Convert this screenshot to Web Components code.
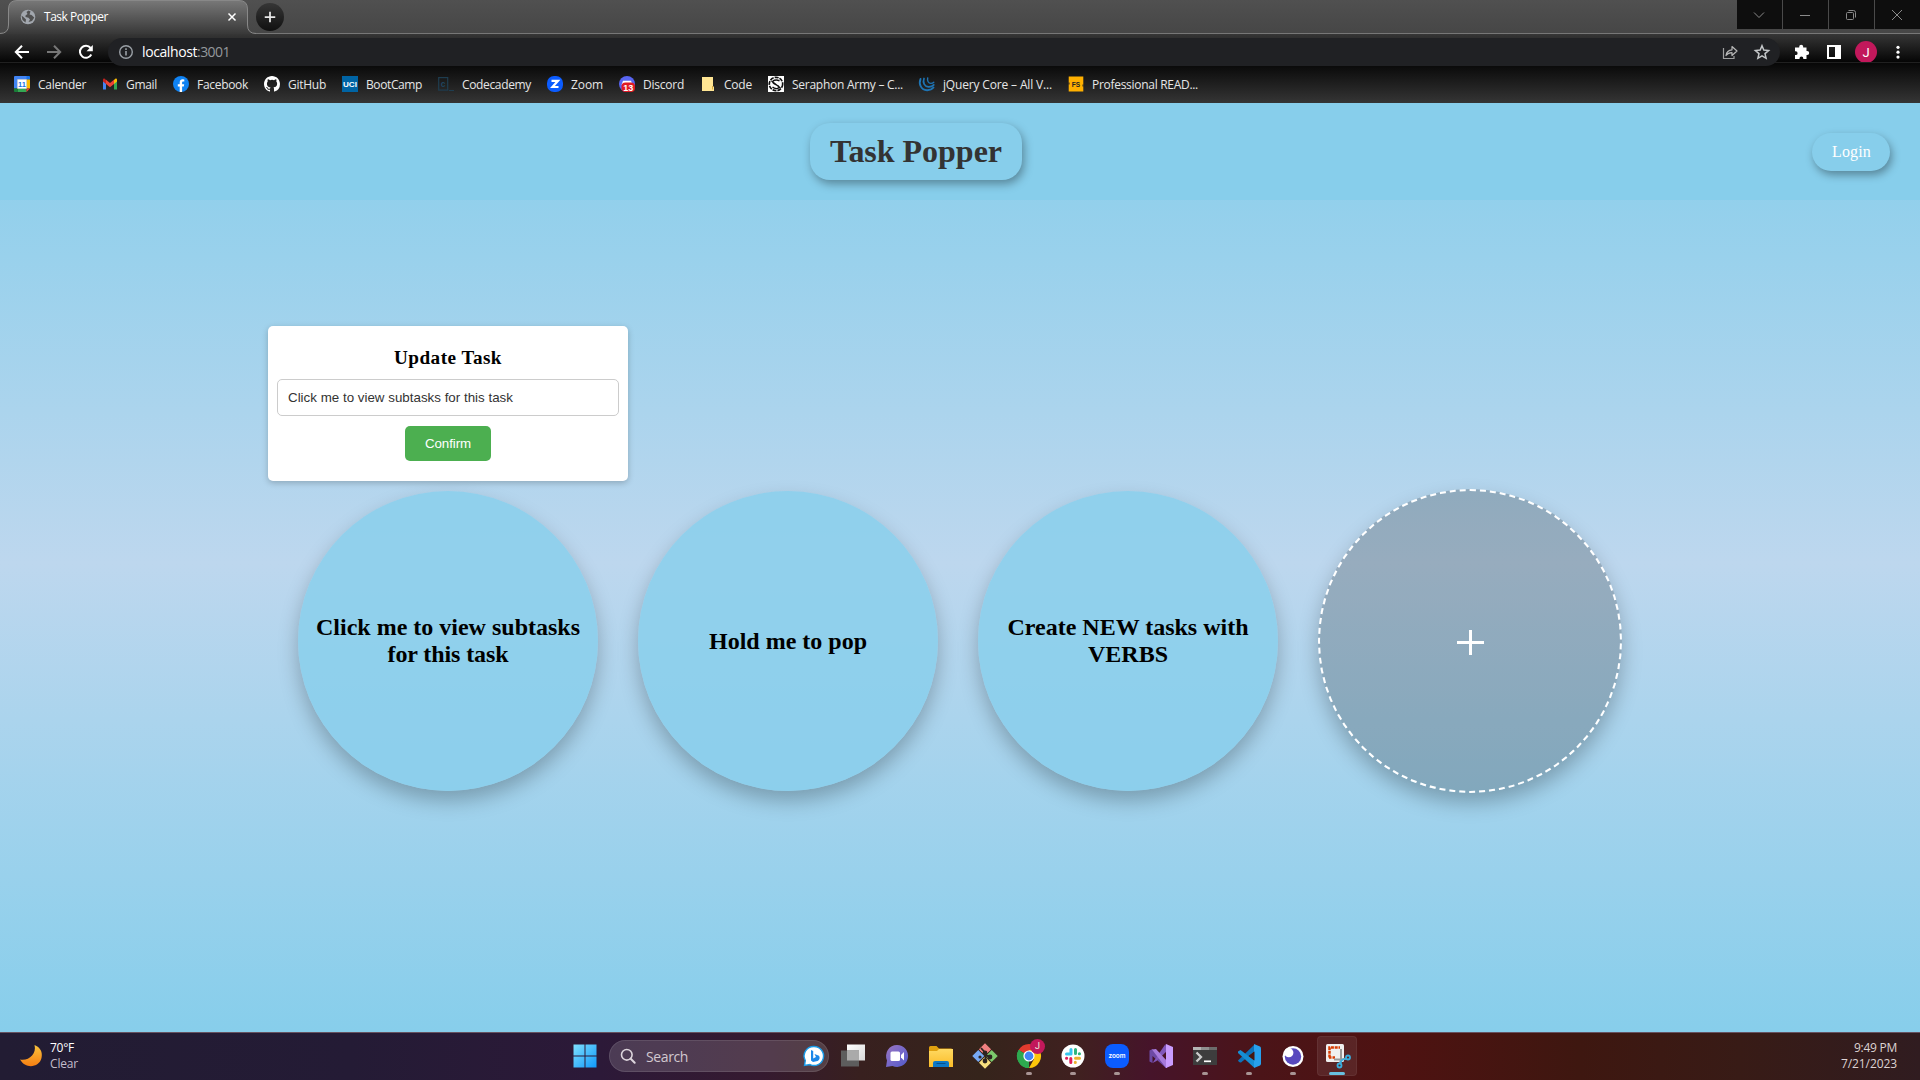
<!DOCTYPE html>
<html lang="en">
<head>
<meta charset="utf-8">
<title>Task Popper</title>
<style>
html,body{margin:0;height:100%;overflow:hidden;background:#87ceeb}
</style>
</head>
<body>
<desktop-screen></desktop-screen>
<script>
const ICONS = {
globe:['0 0 16 16','<circle cx="8" cy="8" r="7.3" fill="#a2a7ae"/><path d="M8.500 1.500 6.500 3l1 2-2 1.500v1.500l3 .8 1.500 1.700-1.500 2.500 3.500-1 2.300-3.500-2.800-2.500-2-.5 1-3zM1.500 6.500l2.500 2 2 2-.5 3-3-2.500z" fill="#505050"/>'],
close:['0 0 16 16','<path d="M4 4l8 8M12 4l-8 8" stroke="#fff" stroke-width="1.7"/>'],
plus:['0 0 16 16','<path d="M8 2v12M2 8h12" stroke="#e8e8e8" stroke-width="2"/>'],
back:['0 0 16 16','<path d="M15 8H2M8 1.700 1.800 8 8 14.300" fill="none" stroke="#fff" stroke-width="2"/>'],
fwd:['0 0 16 16','<path d="M1 8h13M8 1.700 14.200 8 8 14.300" fill="none" stroke="#777" stroke-width="2"/>'],
reload:['0 0 16 16','<path d="M13.300 10.500A6 6 0 1 1 12.600 4" fill="none" stroke="#fff" stroke-width="2"/><path d="M14.800 1v6.300H8.500z" fill="#fff"/>'],
info:['0 0 16 16','<circle cx="8" cy="8" r="6.300" fill="none" stroke="#9aa0a6" stroke-width="1.400"/><path d="M8 7v4.500M8 4.300v1.600" stroke="#9aa0a6" stroke-width="1.600"/>'],
share:['0 0 16 16','<path d="M1.500 4v10.500H12V12" fill="none" stroke="#a0a0a0" stroke-width="1.200"/><path d="M4 11.500C4.500 8 6.500 6 10 5.800V2.500L15 7l-5 4.500V8.700C7.500 8.700 5.500 9.500 4 11.500z" fill="none" stroke="#b8b8b8" stroke-width="1.200" stroke-linejoin="round"/>'],
star:['0 0 16 16','<path d="M8 1.700l1.800 4.400 4.800.4-3.600 3.100 1.100 4.700L8 11.800l-4.100 2.500L5 9.600 1.400 6.500l4.800-.4z" fill="none" stroke="#c4c7c9" stroke-width="1.500"/>'],
puzzle:['0 0 16 16','<path d="M2 3.500h3.200v-.7a2 2 0 0 1 4 0v.7h3.300V7h.7a2 2 0 0 1 0 4h-.7v4H9.300v-.6a1.900 1.900 0 0 0-3.800 0v.6H1v-3.900h.7a1.900 1.900 0 0 0 0-3.800H1V3.500z" fill="#fff"/>'],
panel:['0 0 16 16','<path d="M1 1h14v14H1zM3 3v10h6V3z" fill="#fff" fill-rule="evenodd"/>'],
dots:['0 0 16 16','<g fill="#fff"><circle cx="8" cy="3.300" r="1.600"/><circle cx="8" cy="8.200" r="1.600"/><circle cx="8" cy="13.100" r="1.600"/></g>'],
chev:['0 0 12 12','<path d="M1 3.500l5 5 5-5" fill="none" stroke="#8a8a8a"/>'],
min:['0 0 12 12','<path d="M1 6.500h10" stroke="#8a8a8a"/>'],
max:['0 0 12 12','<rect x="1.500" y="3.500" width="7" height="7" rx="1" fill="none" stroke="#8a8a8a"/><path d="M3.500 1.500h5a2 2 0 0 1 2 2v5" fill="none" stroke="#8a8a8a"/>'],
x:['0 0 12 12','<path d="M1 1l10 10M11 1L1 11" stroke="#8a8a8a"/>'],
cal:['0 0 16 16','<path fill="#4285f4" d="M0 1a1 1 0 0 1 1-1h14v3.500H3.500V12.500H0z"/><path fill="#1a73e8" d="M12.500 0H15a1 1 0 0 1 1 1v2.500h-3.500z"/><path fill="#fbbc04" d="M12.500 3.500H16v9h-3.500z"/><path fill="#34a853" d="M3.500 12.500h9V16h-9z"/><path fill="#188038" d="M0 12.500h3.500V16H1a1 1 0 0 1-1-1z"/><path fill="#ea4335" d="M12.500 12.500H16L12.500 16z"/><path fill="#fff" d="M3.300 3.300h9.400v9.400H3.300z"/><text x="8" y="10.700" font-family="Liberation Sans" font-size="7.500" font-weight="700" fill="#1a73e8" text-anchor="middle">11</text>'],
gmail:['0 0 16 16','<path fill="#4285f4" d="M1 4v9.500h3V7z"/><path fill="#34a853" d="M15 4v9.500h-3V7z"/><path fill="#fbbc04" d="M12 4l1.300-1.200C14.200 2.200 15 2.800 15 4v1.500L12 8z"/><path fill="#c5221f" d="M4 4 2.700 2.800C1.800 2.200 1 2.800 1 4v1.500L4 8z"/><path fill="#ea4335" d="M4 3.700 8 7l4-3.300V8l-4 3.200L4 8z"/>'],
fb:['0 0 16 16','<circle cx="8" cy="8" r="8" fill="#0f82f2"/><path d="M6.700 16v-5.500H4.800V8.200h1.900V6.500c0-2.100 1.200-3.200 3-3.200l1.600.1v2h-1c-.9 0-1.200.5-1.200 1.200v1.600h2.100l-.4 2.300H9.100V16z" fill="#fff"/>'],
gh:['0 0 16 16','<path fill="#fff" d="M8 0C3.580 0 0 3.580 0 8c0 3.540 2.290 6.530 5.470 7.590.4.070.55-.17.55-.38v-1.490c-2.010.37-2.530-.49-2.690-.94-.09-.23-.48-.94-.82-1.130-.28-.15-.68-.52-.01-.53.63-.01 1.080.58 1.230.82.720 1.210 1.870.87 2.330.66.070-.52.280-.87.510-1.070-1.780-.2-3.640-.89-3.640-3.950 0-.87.310-1.590.82-2.150-.08-.2-.36-1.020.08-2.120 0 0 .67-.21 2.200.82a7.500 7.500 0 0 1 4 0c1.530-1.040 2.200-.82 2.200-.82.440 1.100.160 1.920.08 2.120.51.560.82 1.270.82 2.150 0 3.070-1.870 3.750-3.650 3.950.29.250.54.730.54 1.480v2.200c0 .21.150.46.550.38A8 8 0 0 0 16 8c0-4.420-3.580-8-8-8z"/>'],
uci:['0 0 16 16','<path fill="#0064a4" d="M0 0h16v16H0z"/><text x="8" y="10.800" font-family="Liberation Sans" font-size="7.500" font-weight="700" fill="#fff" text-anchor="middle" textLength="14" lengthAdjust="spacingAndGlyphs">UCI</text>'],
cc:['0 0 16 16','<rect x=".7" y="1.600" width="9" height="12.500" fill="none" stroke="#1e3d50" stroke-width="1.200"/><path d="M11 14.500h5" stroke="#1e3d50"/><text x="5.200" y="11" font-family="Liberation Sans" font-size="8.500" font-weight="700" fill="#1f4560" text-anchor="middle">c</text>'],
zm:['0 0 16 16','<rect width="16" height="16" rx="7" fill="#0b5cff"/><path d="M4.500 4.800h6.500L5.500 11h6" fill="none" stroke="#fff" stroke-width="2.200"/>'],
disc:['0 0 16 16','<circle cx="8" cy="8" r="8" fill="#5865f2"/><path d="M4 4.800h8l1.500 4H2.500z" fill="#fff"/><rect x="2.500" y="6.500" width="13.500" height="9.500" rx="4" fill="#e01b24"/><text x="9.200" y="14.500" font-family="Liberation Sans" font-size="9" font-weight="700" fill="#fff" text-anchor="middle">13</text>'],
note:['0 0 16 16','<path d="M2 1h11v9.500h1V15H2z" fill="#ffe593"/><path d="M12.500 10v3.500" stroke="#d6aa3c"/>'],
ser:['0 0 16 16','<path fill="#fff" d="M0 0h16v16H0z"/><circle cx="8" cy="8" r="6.700" fill="none" stroke="#111" stroke-width="1.700" stroke-dasharray="4 1"/><path d="M11.500 4.800C8 3 3.800 4.500 5 6.800s6 2 6 4.200-4.500 2-6.500 0M3.500 5l9 7" fill="none" stroke="#111" stroke-width="1.400"/>'],
jq:['0 0 16 16','<g fill="none" stroke="#1e74b4" stroke-linecap="round"><path d="M1.500 3C-.5 8 2 14 8 14.200c3 .1 5-.9 6.500-2.700" stroke-width="1.900"/><path d="M5 2.500C3.500 6.500 5.500 10.500 9.500 10.800c2.500.1 4-.6 5.300-2" stroke-width="1.700"/><path d="M8.700 2C8 5 9.500 7.200 11.800 7.400c1.300 0 2.300-.4 3-1.200" stroke-width="1.400"/></g>'],
fs:['0 0 16 16','<path fill="#ffb000" d="M.700.500h14.600v15H.700z"/><path d="M1 6.500v2M15 8.500v2" stroke="#222" stroke-width="1"/><text x="8" y="10.700" font-family="Liberation Sans" font-size="6.500" font-weight="700" fill="#222" text-anchor="middle">FS</text>'],
moon:['0 0 24 24','<defs><linearGradient id="m" x1="0" y1="0" x2="0" y2="1"><stop stop-color="#f9c43e"/><stop offset="1" stop-color="#f57e12"/></linearGradient></defs><path d="M15.500 1C21 3 24 8 22.500 14 20.500 23 7 26 1 15.500 9 17.500 18 10 15.500 1z" fill="url(#m)"/>'],
win:['0 0 24 24','<defs><linearGradient id="w" x1="0" y1="0" x2="1" y2="1"><stop stop-color="#7fe0fd"/><stop offset="1" stop-color="#0f98fa"/></linearGradient></defs><path fill="url(#w)" d="M.5.5h11v11H.5zM12.500.5h11v11h-11zM.5 12.500h11v11H.5zM12.500 12.500h11v11h-11z"/>'],
search:['0 0 16 16','<circle cx="6.800" cy="6.800" r="5.300" fill="none" stroke="#ddd5dc" stroke-width="1.600"/><path d="M10.700 10.700l4 4" stroke="#ddd5dc" stroke-width="2" stroke-linecap="round"/>'],
bing:['0 0 20 20','<path d="M10 .5a9.500 9.500 0 1 1-4 18.100L.5 19.500l.8-5A9.500 9.500 0 0 1 10 .5z" fill="#fff" stroke="#199be8" stroke-width="1.400"/><path d="M7 4l2.200 1v7.500l2.800-1.500-1.500-3 4.500 1.800c1.500 2.700 0 4.500-1.500 5.200L9 16l-2-1.500z" fill="#1b87e8"/>'],
tv:['0 0 24 24','<defs><linearGradient id="t" x1="0" y1="0" x2="1" y2="1"><stop stop-color="#fff"/><stop offset="1" stop-color="#d8d8d8"/></linearGradient></defs><path fill="url(#t)" d="M6 .5h18v16H6z"/><path fill="#5d5d5d" d="M0 6.500h18v16H0z"/><path fill="#aaa" d="M6 6.500h12v10H6z"/>'],
chat:['0 0 24 24','<defs><linearGradient id="c" x1="0" y1="0" x2="1" y2="1"><stop stop-color="#9a75bf"/><stop offset=".5" stop-color="#7668c9"/><stop offset="1" stop-color="#5059c9"/></linearGradient></defs><path d="M12 1a11 11 0 1 1-4.500 21L1 23l1-6.500A11 11 0 0 1 12 1z" fill="url(#c)"/><rect x="5.500" y="7.500" width="9.500" height="9.500" rx="1.500" fill="#fff"/><path d="M16 11l3-3v8.500l-3-3z" fill="#fff"/>'],
folder:['0 0 24 24','<defs><linearGradient id="f" x1="0" y1="0" x2="0" y2="1"><stop stop-color="#ffd962"/><stop offset="1" stop-color="#fbbc28"/></linearGradient></defs><path d="M0 3.500Q0 2 1.500 2h6L10 4.500h12q2 0 2 2V12H0z" fill="#dfa00f"/><path d="M0 7h8l2-2h14v18H0z" fill="url(#f)"/><path d="M4 23v-4q0-2 2-2h12q2 0 2 2v4z" fill="#0c78c6"/><path d="M7.500 19.500h9" stroke="#07508c"/>'],
git:['0 0 24 24','<g transform="translate(12 12) rotate(45)"><path fill="#f08080" d="M-9-9h8.500v8.500H-9z"/><path fill="#7cc96c" d="M.5-9H9v8.500H.5z"/><path fill="#78aaf5" d="M-9 .5h8.500V9H-9z"/><path fill="#f8df7e" d="M.5.5H9V9H.5z"/><path fill="#f08080" d="M-8.500-8.500h8v8h-8z"/></g><g stroke="#2c2420" stroke-width="1.800" fill="#2c2420"><path d="M8 4l4.500 5v9M12 10l5 4" fill="none"/><circle cx="12" cy="9" r="1.500"/><circle cx="12" cy="17" r="1.500"/><circle cx="17" cy="13" r="1.500"/><circle cx="7" cy="13" r=".7"/></g>'],
chrome:['0 0 24 24','<path d="M12 12 1.600 6A12 12 0 0 1 22.400 6z" fill="#e33b2e"/><path d="M12 12V24A12 12 0 0 1 1.600 6z" fill="#2da94f"/><path d="M12 12 22.400 6A12 12 0 0 1 12 24l5-9z" fill="#fdc60a"/><path d="M1.600 6h1L9 17l3 7A12 12 0 0 1 1.600 6z" fill="#2da94f"/><path d="M12 6h10.400l.9 2L12 11z" fill="#fdc60a"/><circle cx="12" cy="12" r="5.600" fill="#fff"/><circle cx="12" cy="12" r="4.400" fill="#4285f4"/>'],
slack:['0 0 24 24','<circle cx="12" cy="12" r="11.500" fill="#fff"/><g fill="none" stroke-width="3" stroke-linecap="round"><path d="M10 5.500v4.500M5.500 10H10" stroke="#36c5f0"/><path d="M14.500 5.500V9.500M18.500 9.800h-.2" stroke="#2eb67d"/><path d="M14.500 14.300h4M14.300 18.500v-.2" stroke="#ecb22e"/><path d="M9.800 14.500v4M5.500 14.300h.2" stroke="#e01e5a"/></g>'],
zoom:['0 0 24 24','<rect width="24" height="24" rx="8" fill="#0b5cff"/><text x="12" y="14" font-family="Inter" font-size="7" font-weight="600" fill="#fff" text-anchor="middle" textLength="17" lengthAdjust="spacingAndGlyphs">zoom</text>'],
vs:['0 0 24 24','<path d="M.5 6.500 3.500 5l14 14-.5 5L3.500 12v7L.5 17.500z" fill="#6d4aa5"/><path d="M3.500 19 16.500 0 18 7 7.500 17z" fill="#8157bb"/><path d="M3 5.500 7 5l11 12v7h-1z" fill="#a77bdc"/><path d="M17 0l7 3v18l-7 3z" fill="#c99cff"/>'],
term:['0 0 24 24','<path fill="#3d3d3d" d="M0 3h24v18H0z"/><path fill="#b5b5b5" d="M0 3h8v3H0z"/><path fill="#909090" d="M8 3h8v3H8z"/><path fill="#6c6c6c" d="M16 3h8v3h-8z"/><path d="M3.500 8.500l4.500 4.500-4.500 4.500" fill="none" stroke="#ccc" stroke-width="2.300"/><path d="M11 17.300h7" stroke="#fff" stroke-width="1.700"/>'],
code:['0 0 24 24','<path d="M1 16.500 17 1l1 6L4 18.500q-2 .5-3-2z" fill="#0c72ba"/><path d="M1 7.500 3.500 6 18 17l-1 6.500L1 9z" fill="#168ed4"/><path d="M17 0l6 2.500q1 .5 1 2v15q0 1.500-1 2L17 24z" fill="#27a0ec"/><path d="M17.500 7.500v9L11.500 12z" fill="#46170f"/>'],
moonapp:['0 0 24 24','<circle cx="12" cy="12.500" r="10.500" fill="#fff"/><circle cx="12" cy="12.500" r="8.200" fill="#5849be"/><circle cx="7.800" cy="8.700" r="4.600" fill="#fff"/>'],
snip:['0 0 28 28','<rect x="3" y="2" width="18" height="18" rx="1.500" fill="#f0f0f0"/><path d="M6.500 15.500V5.500H17" fill="none" stroke="#d83b01" stroke-width="2.500" stroke-dasharray="3 .8"/><path d="M6 15.500h6" stroke="#d83b01" stroke-width="2.500" stroke-dasharray="2.500 1"/><path d="M18 7v10l-1 5M11 17.500h8l4-1" fill="none" stroke="#999" stroke-width="2"/><g fill="none" stroke="#39aede" stroke-width="1.800"><circle cx="25" cy="15.500" r="2"/><circle cx="16.500" cy="23.500" r="2"/><path d="M17 21.500l2-3.500 4-1.500"/></g>']
};
const define = (tag, html, setup) => {
  const tpl = document.createElement('template');
  tpl.innerHTML = html;
  customElements.define(tag, class extends HTMLElement {
    connectedCallback() {
      if (this.shadowRoot) return;
      this.attachShadow({mode:'open'}).append(tpl.content.cloneNode(true));
      if (setup) setup(this, this.shadowRoot);
    }
  });
};

/* An icon from the table; `size` sets its side in pixels. */
define('ui-icon','<style>:host{display:block;flex:none}svg{display:block;overflow:visible}</style>',(el,root)=>{
  const [box,body]=ICONS[el.getAttribute('name')], s=el.getAttribute('size')||16;
  root.innerHTML+=`<svg viewBox="${box}" width="${s}" height="${s}">${body}</svg>`;
});

/* A one-line label whose tracking is spread to fill the width `w`. */
define('fit-text','<style>:host{display:block;flex:none;white-space:nowrap}span{display:inline-block}</style><span></span>',(el,root)=>{
  const span=root.querySelector('span'), w=+el.getAttribute('w');
  span.textContent=el.getAttribute('text');
  const fit=(w-span.getBoundingClientRect().width)/span.textContent.length;
  span.style.letterSpacing=fit.toFixed(3)+'px';
  el.style.width=w+'px';
});

define('window-buttons',`<style>
:host{display:flex;gap:1px;height:29px;background:#4a4a4a}
div{width:45px;box-sizing:border-box;padding-right:1px;display:grid;place-items:center;background:#0e0e0e}
ui-icon{margin-right:1px}
</style><div><ui-icon name="chev" size="12"></ui-icon></div><div><ui-icon name="min" size="12"></ui-icon></div><div><ui-icon name="max" size="12"></ui-icon></div><div><ui-icon name="x" size="12"></ui-icon></div>`);

define('tab-strip',`<style>
:host{display:flex;height:34px;box-sizing:border-box;background:linear-gradient(#505050,#464646);box-shadow:inset 0 -1px #777;color:#fff;font-size:12px}
.tab{width:256px;height:34px;position:relative;flex:none}
.tab>svg{position:absolute;inset:0}
.row{position:relative;display:flex;align-items:center;height:34px;padding:0 17px 0 20px;gap:8px}
.row fit-text{margin-top:-1px}
.grow{flex:1}
.new{width:28px;height:28px;margin:3px 0 0;border-radius:50%;background:linear-gradient(#363636,#101010);display:grid;place-items:center}
</style>
<div class="tab"><svg width="256" height="34"><defs><linearGradient id="g" x1="0" y1="0" x2="0" y2="1"><stop stop-color="#787878"/><stop offset="1" stop-color="#363636"/></linearGradient></defs><path d="M0 33.500Q8.500 33.500 8.500 25V9Q8.500.5 17 .5H239Q247.500.5 247.500 9V25Q247.500 33.500 256 33.500V35H0z" fill="url(#g)"/><path d="M0 33.500Q8.500 33.500 8.500 25V9Q8.500.5 17 .5H239Q247.500.5 247.500 9V25Q247.500 33.500 256 33.500" fill="none" stroke="#888"/></svg>
<div class="row"><ui-icon name="globe" size="16"></ui-icon><fit-text w="64" text="Task Popper"></fit-text><div class="grow"></div><ui-icon name="close" size="14"></ui-icon></div></div>
<div class="new"><ui-icon name="plus" size="14"></ui-icon></div><div class="grow"></div><window-buttons></window-buttons>`);

define('address-bar',`<style>
:host{display:flex;align-items:flex-start;height:28px;box-sizing:border-box;padding:4px 0 0 14px;background:linear-gradient(#363636,#050505);color:#fff;font-size:14px}
.nav{display:flex;gap:16px;padding:6px 14px 0 0}
.omni{position:relative;z-index:1;flex:1;height:28px;border-radius:14px;background:#202124;display:flex;align-items:center;padding:0 10px;box-sizing:border-box}
.omni fit-text{margin-top:-1px}
.omni fit-text:nth-of-type(1){margin-left:8px}.port{color:#94989c}
.grow{flex:1}.omni ui-icon[name=star]{margin-left:16px}
.ext{display:flex;align-items:center;height:28px;gap:16px;padding:0 14px 0 14px}
.me{width:22px;height:22px;margin:0 -3px;border-radius:50%;background:#c2185b;display:grid;place-items:center;font:13px "Roboto",sans-serif}
</style>
<div class="nav"><ui-icon name="back"></ui-icon><ui-icon name="fwd"></ui-icon><ui-icon name="reload"></ui-icon></div>
<div class="omni"><ui-icon name="info"></ui-icon><fit-text w="55" text="localhost"></fit-text><fit-text class="port" w="33" text=":3001"></fit-text><div class="grow"></div><ui-icon name="share"></ui-icon><ui-icon name="star"></ui-icon></div>
<div class="ext"><ui-icon name="puzzle"></ui-icon><ui-icon name="panel"></ui-icon><div class="me">J</div><ui-icon name="dots"></ui-icon></div>`);

define('book-mark',`<style>:host{display:flex;align-items:center;gap:8px}</style>`,(el,root)=>{
  root.innerHTML+=`<ui-icon name="${el.getAttribute('icon')}"></ui-icon><fit-text w="${el.getAttribute('w')}" text="${el.getAttribute('text')}"></fit-text>`;
});
define('bookmarks-bar',`<style>
:host{display:flex;gap:16px;height:41px;box-sizing:border-box;align-items:center;padding:2px 14px 0;background:linear-gradient(#070707,#353535);border-top:1px solid #202020;color:#e6e6e6;font-size:12px}
</style>`,(el,root)=>{
  root.innerHTML+=[['cal','Calender',48],['gmail','Gmail',31],['fb','Facebook',51],['gh','GitHub',38],['uci','BootCamp',56],['cc','Codecademy',69],['zm','Zoom',32],['disc','Discord',41],['note','Code',28],['ser','Seraphon Army – C...',111],['jq','jQuery Core – All V...',109],['fs','Professional READ...',106]]
  .map(([i,t,w])=>`<book-mark icon="${i}" text="${t}" w="${w}"></book-mark>`).join('');
});
define('browser-chrome',`<style>:host{display:flex;flex-direction:column;height:103px;font-family:"Open Sans","Noto Sans",sans-serif}</style>
<tab-strip></tab-strip><address-bar></address-bar><bookmarks-bar></bookmarks-bar>`);

define('app-header',`<style>
:host{display:flex;align-items:center;height:97px;background:#87ceeb;padding:0 30px 0 20px;box-sizing:border-box}
.mid{flex:1;display:flex;justify-content:center}
h1{margin:0;box-sizing:border-box;height:57px;padding:10px 20px;border-radius:20px;font-size:32px;line-height:37px;color:#333;box-shadow:2px 4px 10px rgba(0,0,0,.35)}
.login{box-sizing:border-box;width:78px;height:38px;line-height:38px;padding-left:20px;border-radius:20px;font-size:16px;color:#fff;box-shadow:2px 4px 8px rgba(0,0,0,.35)}
</style><div class="mid"><h1><fit-text w="172" text="Task Popper"></fit-text></h1></div><div class="login"><fit-text w="39" text="Login"></fit-text></div>`);

define('task-bubble',`<style>
:host{display:flex;position:relative;align-items:center;justify-content:center;width:300px;height:300px;border-radius:50%;background:rgba(135,206,235,.82);box-shadow:0 10px 20px rgba(0,0,0,.25);font-size:24px;font-weight:700;line-height:27px}
:host([add]){border:2px dashed #fff;background:rgba(0,0,0,.2);color:#fff;font-weight:400}
.t{display:flex;flex-direction:column;align-items:center}
</style><div class="t"><slot></slot></div><slot name="popup"></slot>`);

define('update-popup',`<style>
:host{position:absolute;bottom:calc(100% + 10px);left:-30px;width:360px;height:155px;box-sizing:border-box;background:#fff;border-radius:5px;box-shadow:0 2px 6px rgba(0,0,0,.22);display:flex;flex-direction:column;align-items:center;padding:21px 9px 0;font-weight:400}
h3{margin:0 0 10px;font-size:19.200px;line-height:22px;font-weight:700}
.in{box-sizing:border-box;width:342px;height:37px;border:1px solid #ccc;border-radius:5px;padding:0 10px;font:13.333px/35px "Liberation Sans",sans-serif;color:#333;margin-bottom:10px}
.ok{box-sizing:border-box;width:86px;height:35px;border-radius:5px;background:#4caf50;color:#fff;font:13.333px/35px "Liberation Sans",sans-serif;padding:0 20px}
</style><h3><fit-text w="108" text="Update Task"></fit-text></h3><div class="in"><fit-text w="225" text="Click me to view subtasks for this task"></fit-text></div><div class="ok"><fit-text w="46" text="Confirm"></fit-text></div>`);

define('task-page',`<style>
:host{display:flex;flex-direction:column;height:929px;background:linear-gradient(#87ceeb,#bdd7ee 49.500%,#87ceeb);font-family:"Liberation Serif",serif;color:#000}
main{flex:1;display:flex;justify-content:center;align-items:center;gap:40px;padding-top:50px}
.plus{width:27px;height:25px;background:linear-gradient(#fff,#fff) 50% 50%/27px 3px no-repeat,linear-gradient(#fff,#fff) 50% 50%/3px 25px no-repeat;margin-top:3px}
</style><app-header></app-header><main>
<task-bubble><fit-text w="264" text="Click me to view subtasks"></fit-text><fit-text w="121" text="for this task"></fit-text><update-popup slot="popup"></update-popup></task-bubble>
<task-bubble><fit-text w="158" text="Hold me to pop"></fit-text></task-bubble>
<task-bubble><fit-text w="241" text="Create NEW tasks with"></fit-text><fit-text w="80" text="VERBS"></fit-text></task-bubble>
<task-bubble add><div class="plus" role="img" aria-label="Add task"></div></task-bubble></main>`);

define('task-button',`<style>
:host{display:grid;place-items:center;position:relative;width:40px;height:40px;margin:0 2px;border-radius:4px;box-sizing:border-box}
:host([active]){background:rgba(255,255,255,.08);box-shadow:inset 0 0 0 1px rgba(255,255,255,.06)}
i{display:none;position:absolute;bottom:1px;left:17px;width:6px;height:3px;border-radius:2px;background:#a89494}
:host([open]) i{display:block}
:host([active]) i{display:block;left:12px;width:16px;background:#68bfdf}
b{position:absolute;left:21px;top:3px;width:15px;height:15px;border-radius:50%;background:#c2185b;color:#eed;font:9px/15px "Roboto",sans-serif;text-align:center}
</style>`,(el,root)=>{
  root.innerHTML+=`<ui-icon name="${el.getAttribute('icon')}" size="${el.getAttribute('size')||24}"></ui-icon><i></i>`+(el.hasAttribute('badge')?`<b>${el.getAttribute('badge')}</b>`:'');
});
define('task-bar',`<style>
:host{display:grid;grid-template-columns:563px 1fr 400px;height:48px;box-sizing:border-box;border-top:1px solid #675260;padding-bottom:1px;align-items:center;font-family:"Open Sans","Noto Sans",sans-serif;font-size:12px;background:linear-gradient(90deg,#221c33 0,#241b35 350px,#2c1938 600px,#351a30 760px,#38201f 860px,#35241b 980px,#402020 1080px,#46142a 1150px,#4b1418 1260px,#4e1211 1400px,#3e1710 1580px,#381b16 1740px,#301c20 1920px);color:#fff}
.weather{display:flex;gap:7px;padding-left:19px;align-items:center}
.weather div div,.clock{line-height:16px}.weather .dim{color:#c3bdcb}
.mid{display:flex;align-items:center}
.search{width:220px;height:32px;box-sizing:border-box;margin:0 2px;border-radius:16px;background:rgba(255,255,255,.15);box-shadow:inset 0 0 0 1px rgba(255,255,255,.1);display:flex;align-items:center;padding:0 5px 0 11px;gap:10px;font-size:14px;color:#d2c8d0}
.search .sp{flex:1}
.clock{display:flex;flex-direction:column;align-items:flex-end;padding-right:23px;color:#ddd3d3}
</style>
<div class="weather"><ui-icon name="moon" size="24"></ui-icon><div><div><fit-text w="24" text="70°F"></fit-text></div><div class="dim"><fit-text w="28" text="Clear"></fit-text></div></div></div>
<div class="mid"><task-button icon="win"></task-button><div class="search"><ui-icon name="search"></ui-icon><fit-text w="42" text="Search"></fit-text><div class="sp"></div><ui-icon name="bing" size="20"></ui-icon></div>
<task-button icon="tv"></task-button><task-button icon="chat"></task-button><task-button icon="folder"></task-button><task-button icon="git"></task-button><task-button icon="chrome" open badge="J"></task-button><task-button icon="slack" open></task-button><task-button icon="zoom" open></task-button><task-button icon="vs"></task-button><task-button icon="term" open></task-button><task-button icon="code" open></task-button><task-button icon="moonapp" open></task-button><task-button icon="snip" size="28" active></task-button></div>
<div class="clock"><fit-text w="43" text="9:49 PM"></fit-text><fit-text w="56" text="7/21/2023"></fit-text></div>`);

define('desktop-screen',`<style>:host{display:flex;flex-direction:column;width:1920px;height:1080px;overflow:hidden}</style>
<browser-chrome></browser-chrome><task-page></task-page><task-bar></task-bar>`);
</script>
</body>
</html>
